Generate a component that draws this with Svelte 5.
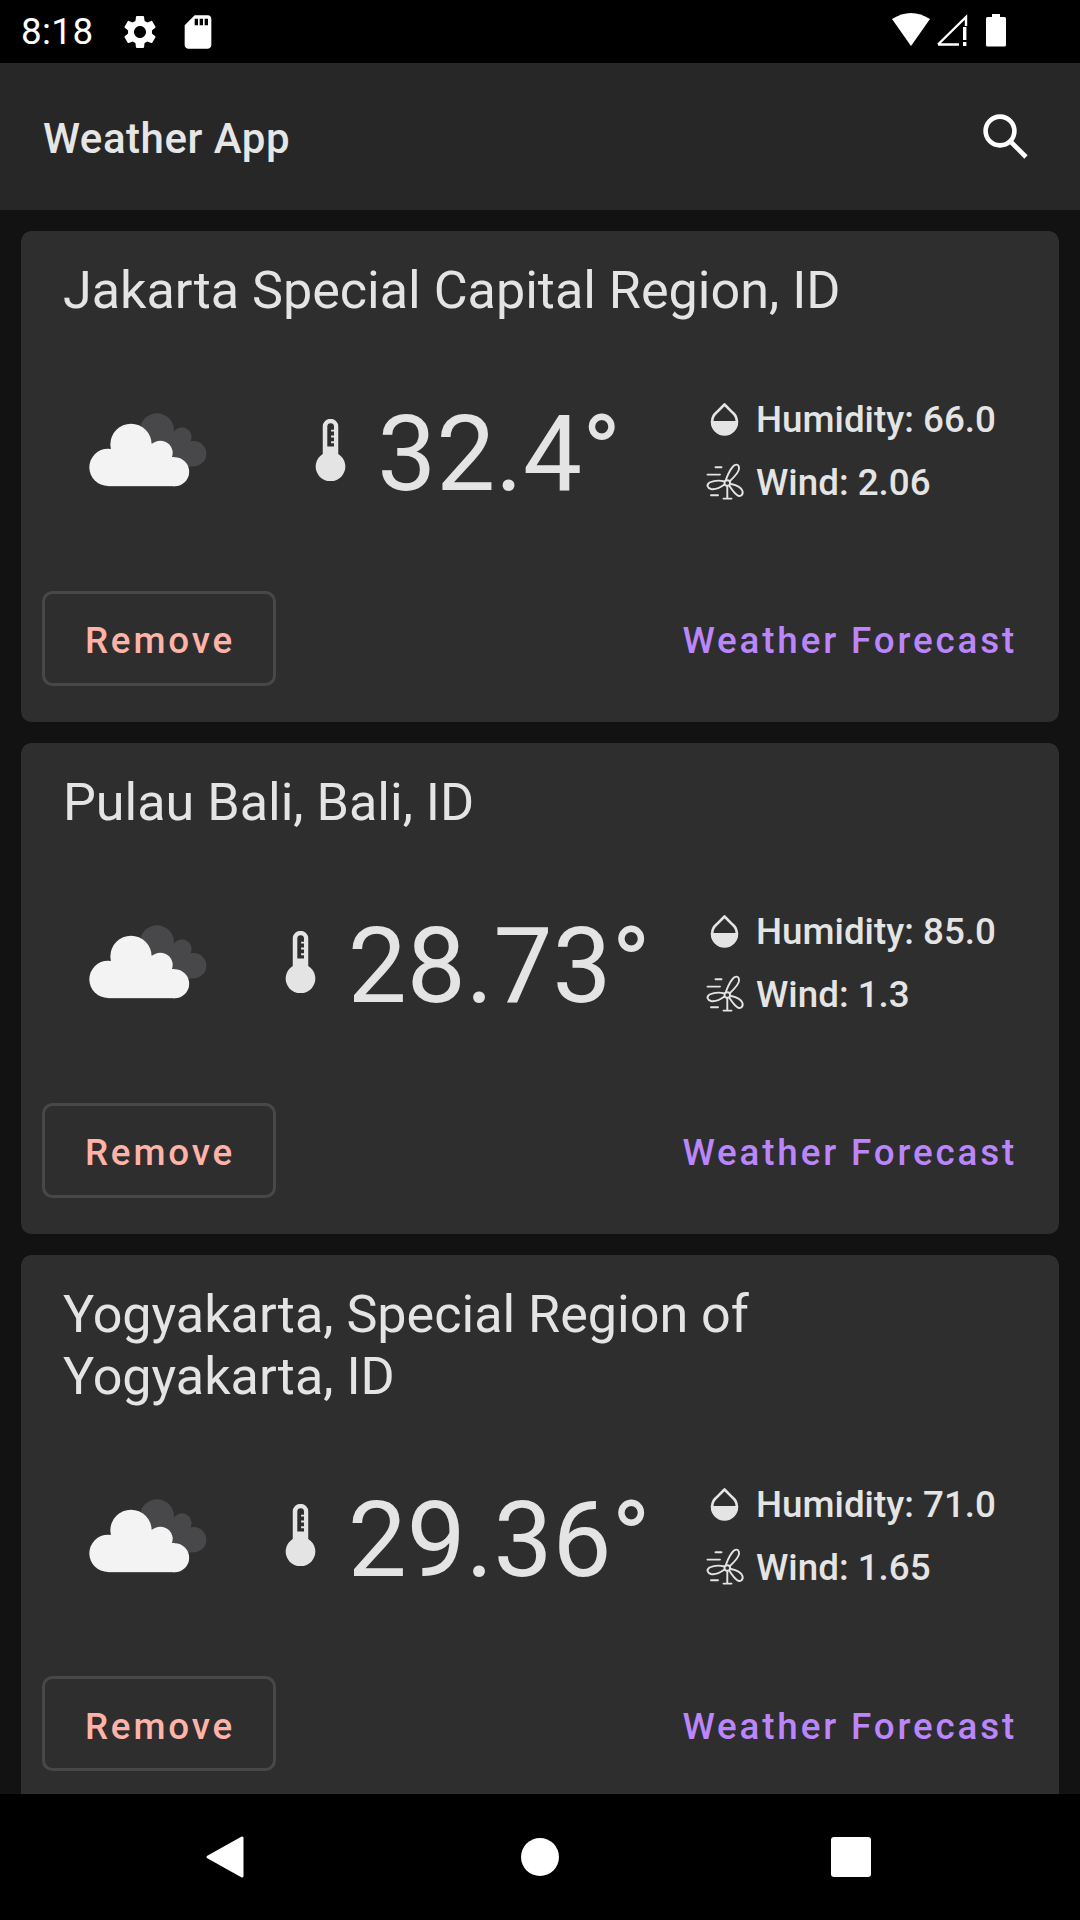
<script>
  const cities = [
    { name: 'Jakarta Special Capital Region, ID', temp: '32.4°', hum: '66.0', wind: '2.06' },
    { name: 'Pulau Bali, Bali, ID', temp: '28.73°', hum: '85.0', wind: '1.3' },
    { name: 'Yogyakarta, Special Region of Yogyakarta, ID', temp: '29.36°', hum: '71.0', wind: '1.65' }
  ];
</script>

<div class="screen">
  <div class="status">
    <span class="time">8:18</span>
    <svg class="gear" viewBox="0 0 24 24"><path fill="#fff" d="M19.14 12.94c.04-.3.06-.61.06-.94 0-.32-.02-.64-.07-.94l2.03-1.58c.18-.14.23-.41.12-.61l-1.92-3.32c-.12-.22-.37-.29-.59-.22l-2.39.96c-.5-.38-1.03-.7-1.62-.94l-.36-2.54c-.04-.24-.24-.41-.48-.41h-3.84c-.24 0-.43.17-.47.41l-.36 2.54c-.59.24-1.13.57-1.62.94l-2.39-.96c-.22-.08-.47 0-.59.22L2.74 8.87c-.12.21-.08.47.12.61l2.03 1.58c-.05.3-.09.63-.09.94s.02.64.07.94l-2.03 1.58c-.18.14-.23.41-.12.61l1.92 3.32c.12.22.37.29.59.22l2.39-.96c.5.38 1.03.7 1.62.94l.36 2.54c.05.24.24.41.48.41h3.84c.24 0 .44-.17.47-.41l.36-2.54c.59-.24 1.13-.56 1.62-.94l2.39.96c.22.08.47 0 .59-.22l1.92-3.32c.12-.22.07-.47-.12-.61l-2.01-1.58zM12 15.6c-1.98 0-3.6-1.62-3.6-3.6s1.62-3.6 3.6-3.6 3.6 1.62 3.6 3.6-1.62 3.6-3.6 3.6z"/></svg>
    <svg class="sd" viewBox="0 0 24 24"><path fill="#fff" d="M18 2h-8L4.02 8 4 20c0 1.1.9 2 2 2h12c1.1 0 2-.9 2-2V4c0-1.1-.9-2-2-2zm-6 6h-2V4h2v4zm3 0h-2V4h2v4zm3 0h-2V4h2v4z"/></svg>
    <span class="spacer"></span>
    <svg class="sys" viewBox="0 0 114 36">
      <path fill="#fff" d="M0 6 Q19 -6 38 6 L19 33 Z"/>
      <path fill="none" stroke="#fff" stroke-width="2.4" d="M46 31.5 L74 4 V13 M46 31.5 H67"/>
      <path fill="#fff" d="M71 14 h3.4 v13 h-3.4z M71 29 h3.4 v4 h-3.4z"/>
      <path fill="#fff" d="M95.5 5 h4.5 v-3 h8 v3 h4.5 a1.5 1.5 0 0 1 1.5 1.5 V33 a1.5 1.5 0 0 1 -1.5 1.5 H95.5 a1.5 1.5 0 0 1 -1.5 -1.5 V6.5 A1.5 1.5 0 0 1 95.5 5z" transform="translate(0 -1)"/>
    </svg>
  </div>

  <header class="appbar">
    <span class="apptitle">Weather App</span>
    <svg class="search" viewBox="0 0 50 50">
      <circle cx="19" cy="19" r="14.4" fill="none" stroke="#fff" stroke-width="4.6"/>
      <path d="M29 29 L45 45" stroke="#fff" stroke-width="4.6" fill="none"/>
    </svg>
  </header>

  <main class="list">
    {#each cities as c}
      <section class="card">
        <h2 class="name">{c.name}</h2>
        <div class="row">
          <svg class="cloud" viewBox="0 0 360 240">
            <g fill="#48484a">
              <circle cx="210" cy="70" r="51"/>
              <circle cx="285" cy="90" r="29"/>
              <circle cx="320" cy="140" r="38"/>
              <path d="M170 60 L285 90 L320 178 L200 190 Z"/>
            </g>
            <g fill="#f3f3f3">
              <circle cx="132" cy="112" r="62"/>
              <circle cx="63" cy="181" r="56"/>
              <circle cx="220" cy="138" r="37"/>
              <circle cx="263" cy="194" r="43.5"/>
              <rect x="63" y="150" width="200" height="87.5"/>
              <rect x="100" y="110" width="120" height="60"/>
            </g>
          </svg>
          <div class="tempwrap">
            <svg class="thermo" viewBox="0 0 32 64">
              <path fill="#e4e4e4" d="M8 7.8 a8 8 0 0 1 16 0 V36 a15.3 15.3 0 1 1 -16 0z"/>
              <path fill="#2e2e2e" d="M12.7 28.5 V7.8 a3.4 3.4 0 0 1 6.9 0 V11 h-3 v2 h3 v4 h-3 v2 h3 v4 h-3 v2 h3 v3.5z"/>
            </svg>
            <span class="temp">{c.temp}</span>
          </div>
          <div class="details">
            <div class="detail">
              <svg class="ic" viewBox="0 0 46 46">
                <path fill="none" stroke="#e4e4e4" stroke-width="2.6" stroke-linejoin="round" d="M20.5 7.5 L28.6 15.6 A12.4 12.4 0 1 1 12.4 15.6 Z"/>
                <path fill="#e4e4e4" d="M6.8 24 H34.2 A13.7 13.7 0 0 1 6.8 24z"/>
              </svg>
              <span>Humidity: {c.hum}</span>
            </div>
            <div class="detail">
              <svg class="ic" viewBox="0 0 46 46">
                <g fill="none" stroke="#e4e4e4" stroke-width="1.9" stroke-linecap="round" stroke-linejoin="round">
                  <circle cx="23.3" cy="23" r="2.8"/>
                  <path d="M22 19.5 C24 14 26 9 30 5.5 C33 3.5 35.5 5 35 9 C34.5 13 29 18 26.5 20.5"/>
                  <path d="M27 24 C32 25 37 27 38.5 31 C39.5 35 36 37.5 33 35 C30 33 27.5 29 25.5 26"/>
                  <path d="M20.5 21.5 C15 20 9 21 5.5 22.5 C2 25 3.5 28 7 29 C12 30 17 27 20.5 24.5"/>
                  <path d="M23.3 26 V38.6 M19.5 38.6 H27.5"/>
                  <path d="M11.5 7.3 H17.5 M3.5 14.6 H16 M7 35.3 H14"/>
                </g>
              </svg>
              <span>Wind: {c.wind}</span>
            </div>
          </div>
        </div>
        <div class="actions">
          <button class="remove">Remove</button>
          <button class="forecast">Weather Forecast</button>
        </div>
      </section>
    {/each}
  </main>

  <nav class="navbar">
    <svg class="back" viewBox="0 0 40 44"><path fill="#fff" stroke="#fff" stroke-width="3" stroke-linejoin="round" d="M37 3 V41 L3 22 Z"/></svg>
    <span class="home"></span>
    <span class="recent"></span>
  </nav>
</div>

<style>
  :global(body) { margin: 0; background: #121212; }
  .screen {
    width: 1080px; height: 1920px; display: flex; flex-direction: column;
    overflow: hidden; background: #121212; color: #e4e4e4;
    font-family: Roboto, "Liberation Sans", sans-serif;
  }
  .status {
    height: 63px; flex: none; background: #000; display: flex; align-items: center;
    padding-left: 21px; padding-right: 74px; box-sizing: border-box; color: #fff;
  }
  .time { font-size: 36.75px; line-height: 63px; width: 100px; letter-spacing: 0.4px; }
  .gear { width: 40px; height: 40px; margin-left: -1px; }
  .sd { width: 40px; height: 40px; margin-left: 18px; }
  .spacer { flex: 1; }
  .sys { width: 114px; height: 36px; margin-top: -2px; }
  .appbar {
    height: 147px; flex: none; background: #272727; display: flex; align-items: center;
    justify-content: space-between; padding: 0 49px 0 43px; box-sizing: border-box;
  }
  .apptitle { font-size: 42px; letter-spacing: 0.525px; font-weight: 500; color: #e6e6e6; margin-top: 4px; }
  .search { width: 50px; height: 50px; }
  .list {
    flex: 1; min-height: 0; overflow: hidden; display: flex; flex-direction: column;
    gap: 21.5px; padding: 21px 21px 0;
  }
  .card {
    flex: none; background: #2e2e2e; border-radius: 10.5px; padding: 29px 21px 36px;
    display: flex; flex-direction: column;
  }
  .name {
    margin: 0; padding: 0 21px; font-size: 52.1px; font-weight: 400; line-height: 61.5px; color: #e4e4e4;
  }
  .row { display: grid; grid-template-columns: 187px 477px 1fr; align-items: center; height: 269px; }
  .cloud { width: 120px; height: 80px; margin-left: 44.5px; margin-bottom: 18px; }
  .tempwrap { display: flex; align-items: center; justify-content: center; gap: 31.5px; margin-bottom: 3px; }
  .thermo { width: 31px; height: 62px; margin-top: -10px; margin-left: 1px; }
  .temp { font-size: 105px; line-height: 123px; color: #e4e4e4; }
  .details { display: flex; flex-direction: column; gap: 17px; margin-bottom: 10px; margin-left: -2px; }
  .detail { display: flex; align-items: center; gap: 6px; font-size: 36.75px; font-weight: 500; line-height: 44px; }
  .ic { width: 46px; height: 46px; flex: none; }
  .actions { display: flex; justify-content: space-between; align-items: center; }
  button { font-family: inherit; background: none; margin: 0; font-size: 36.75px; font-weight: 500; letter-spacing: 2.85px; }
  .remove {
    width: 234px; height: 95px; border: 3px solid #484848; border-radius: 10.5px; color: #ffb3a8; padding: 5px 0 0 2px;
  }
  .forecast { border: 0; padding: 5px 21px 0 0; color: #bb86fc; }
  .navbar {
    height: 126px; flex: none; background: #000;
    display: flex; align-items: center;
  }
  .back { width: 40px; height: 44px; margin-left: 205px; }
  .home { width: 38px; height: 38px; border-radius: 50%; background: #fff; margin-left: 276px; }
  .recent { width: 40px; height: 40px; border-radius: 3px; background: #fff; margin-left: 272px; }
</style>
